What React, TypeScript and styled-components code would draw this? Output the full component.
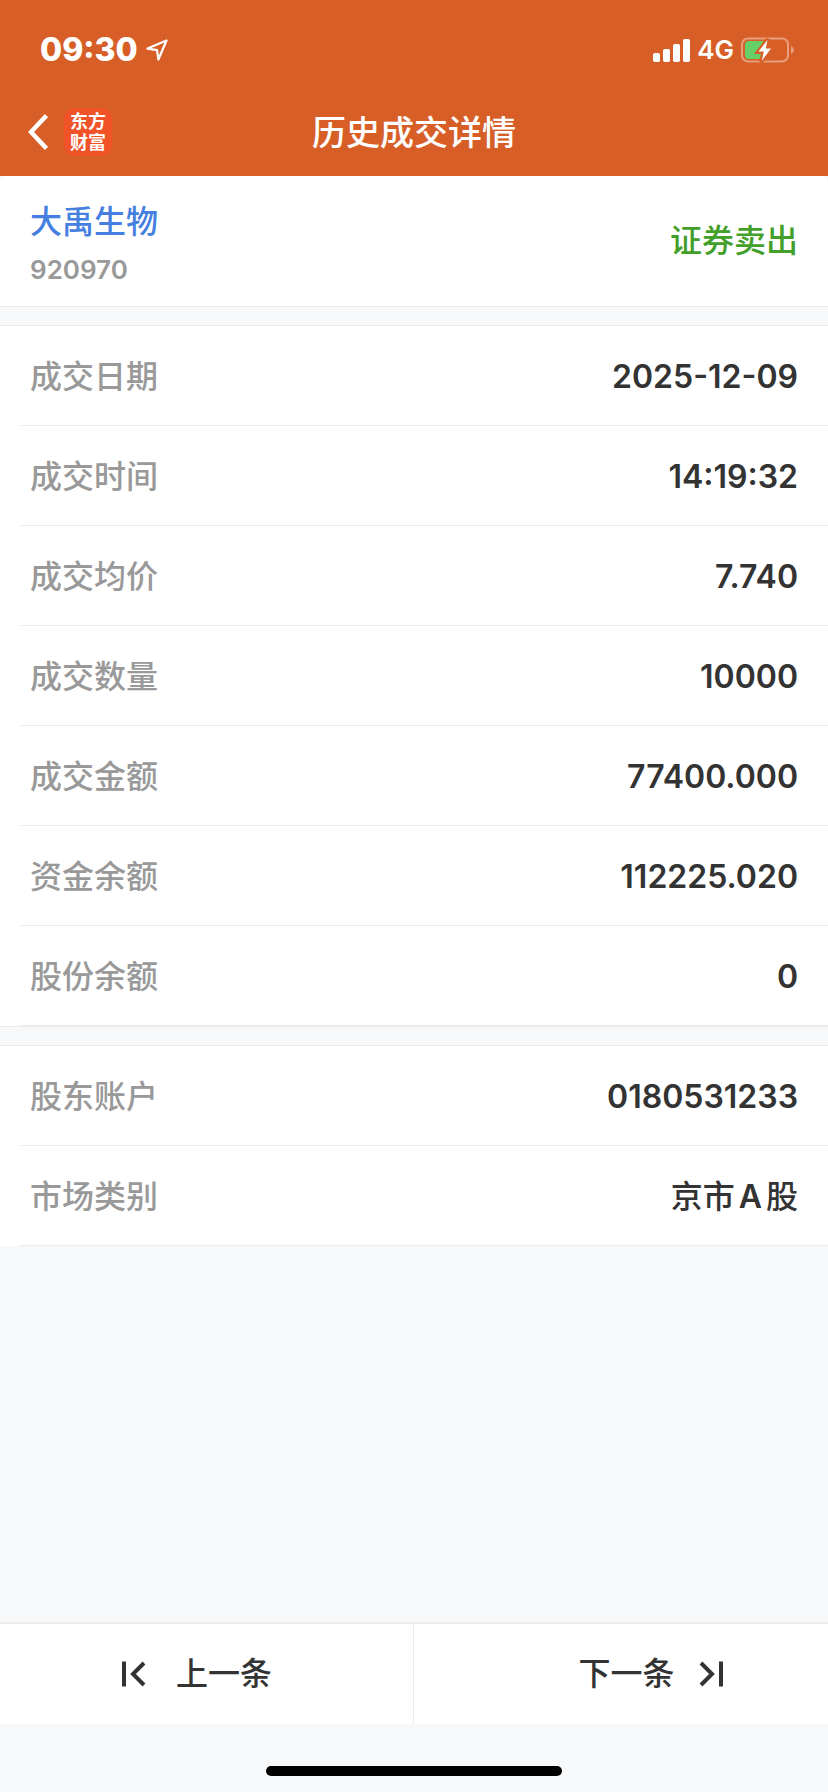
import React from "react";
import styled, { createGlobalStyle } from "styled-components";

const GlobalStyle = createGlobalStyle`
  * { box-sizing: border-box; }
  body {
    margin: 0;
    background: #f7f8fa;
    color: #333;
    font-family: Inter, "Noto Sans CJK SC", sans-serif;
    font-size: 32px;
    line-height: 48px;
    font-weight: 500;
  }
  button { font: inherit; color: inherit; background: none; border: 0; padding: 0; cursor: pointer; }
  svg { display: block; flex: none; }
`;

const Page = styled.div`
  min-height: 100vh;
  display: flex;
  flex-direction: column;
`;

const Header = styled.header`
  background: #d75f27;
  color: #fff;
`;

const StatusBar = styled.div`
  height: 88px;
  padding: 12px 34px 0 40px;
  display: flex;
  align-items: center;
  justify-content: space-between;
`;

const StatusGroup = styled.div<{ $gap: number }>`
  display: flex;
  align-items: center;
  gap: ${(p) => p.$gap}px;
`;

const Clock = styled.time`
  font-weight: 800;
`;

const Network = styled.span`
  font-size: 26px;
  font-weight: 600;
`;

const NavBar = styled.div`
  height: 88px;
  padding: 0 28px;
  display: grid;
  grid-template-columns: 1fr auto 1fr;
  align-items: center;
`;

const NavLeft = styled.div`
  display: flex;
  align-items: center;
  gap: 16px;
`;

const AppLogo = styled.span`
  width: 48px;
  height: 48px;
  padding: 3px 6px;
  border-radius: 10px;
  background: #ef5327;
  font-size: 18px;
  line-height: 21px;
  font-weight: 700;
`;

const Title = styled.h1`
  margin: 0;
  padding-top: 2px;
  font-size: 34px;
  font-weight: 500;
`;

const Summary = styled.section`
  height: 130px;
  padding: 0 30px;
  display: flex;
  align-items: center;
  justify-content: space-between;
  background: #fff;
  border-radius: 8px 8px 0 0;
`;

const Stock = styled.div`
  padding-top: 10px;
`;

const StockName = styled.a`
  display: block;
  color: #457fe0;
  text-decoration: none;
`;

const StockCode = styled.div`
  color: #999;
  font-size: 26px;
  font-weight: 600;
`;

const Side = styled.span`
  color: #429f2a;
`;

const Divider = styled.div`
  height: 20px;
  border: solid #ebebeb;
  border-width: 1px 0;
`;

const List = styled.dl`
  margin: 0;
  padding-left: 20px;
  background: #fff;
`;

const Row = styled.div`
  height: 100px;
  padding: 2px 30px 0 10px;
  display: flex;
  align-items: center;
  justify-content: space-between;
  border-bottom: 1px solid #ebebeb;
`;

const Label = styled.dt`
  color: #999;
`;

const Value = styled.dd`
  margin: 0;
  font-weight: 600;
`;

const MarketValue = styled(Value)`
  font-weight: 500;
`;

const Latin = styled.span`
  margin: 0 4px;
  font-weight: 600;
`;

const Footer = styled.footer`
  margin-top: auto;
`;

const Pager = styled.nav`
  display: grid;
  grid-template-columns: 1fr 1fr;
  border-top: 2px solid #ededed;
  background: #fff;
`;

const PagerButton = styled.button<{ $gap: number; $shift: number }>`
  height: 100px;
  display: flex;
  align-items: center;
  justify-content: center;
  gap: ${(p) => p.$gap}px;
  padding-right: ${(p) => (p.$shift < 0 ? -p.$shift : 0)}px;
  padding-left: ${(p) => (p.$shift > 0 ? p.$shift : 0)}px;

  &:first-child { border-right: 1px solid #ebebeb; }
`;

const HomeArea = styled.div`
  height: 68px;
  padding-bottom: 16px;
  display: flex;
  align-items: flex-end;
  justify-content: center;
`;

const HomeBar = styled.div`
  width: 296px;
  height: 10px;
  border-radius: 5px;
  background: #000;
`;

const LocationIcon = () => (
  <svg width="22" height="22" viewBox="0 0 22 22" fill="none" stroke="#fff" strokeWidth="2.2" strokeLinejoin="round">
    <path d="M20.500 1.500 L1.500 9.600 L11 11.200 L12.400 20.500 Z" />
  </svg>
);

const SignalIcon = () => (
  <svg width="37" height="23" viewBox="0 0 37 23" fill="#fff">
    <rect x="0" y="14" width="7" height="9" rx="1.8" />
    <rect x="10" y="10" width="7" height="13" rx="1.8" />
    <rect x="20" y="5" width="7" height="18" rx="1.8" />
    <rect x="30" y="0" width="7" height="23" rx="1.8" />
  </svg>
);

const BatteryIcon = () => (
  <svg width="53" height="26" viewBox="0 0 53 26">
    <rect x="1" y="1.5" width="46" height="23" rx="6" fill="none" stroke="#e79f7d" strokeWidth="2" />
    <path d="M50 9 Q53 10.5 53 13 Q53 15.500 50 17 Z" fill="#e79f7d" />
    <rect x="4" y="4" width="22" height="18" rx="3.500" fill="#66cf68" />
    <path d="M27 2 L17 15 L22.500 15 L20 25 L31 11.500 L25.500 11.500 Z" fill="#fff" stroke="#d75f27" strokeWidth="4" />
    <path d="M26.500 3 L17.500 14.500 L22.800 14.500 L20.700 24 L30 11.500 L24.800 11.500 Z" fill="#fff" />
  </svg>
);

const BackIcon = () => (
  <svg width="20" height="36" viewBox="0 0 20 36" fill="none" stroke="#fff" strokeWidth="4.5">
    <path d="M18.500 1.500 L3 18 L18.500 34.500" />
  </svg>
);

const FirstIcon = () => (
  <svg width="25" height="26" viewBox="0 0 25 26" fill="none" stroke="#333" strokeWidth="4">
    <path d="M3 0.500 V25.500 M23 2 L12 13 L23 24" />
  </svg>
);

const LastIcon = () => (
  <svg width="25" height="26" viewBox="0 0 25 26" fill="none" stroke="#333" strokeWidth="4">
    <path d="M22 0.500 V25.500 M2 2 L13 13 L2 24" />
  </svg>
);

const trade = [
  ["成交日期", "2025-12-09"],
  ["成交时间", "14:19:32"],
  ["成交均价", "7.740"],
  ["成交数量", "10000"],
  ["成交金额", "77400.000"],
  ["资金余额", "112225.020"],
  ["股份余额", "0"],
];

export default function App() {
  return (
    <Page>
      <GlobalStyle />
      <Header>
        <StatusBar>
          <StatusGroup $gap={8}>
            <Clock>09:30</Clock>
            <LocationIcon />
          </StatusGroup>
          <StatusGroup $gap={7}>
            <SignalIcon />
            <Network>4G</Network>
            <BatteryIcon />
          </StatusGroup>
        </StatusBar>
        <NavBar>
          <NavLeft>
            <button type="button" aria-label="返回"><BackIcon /></button>
            <AppLogo>东方财富</AppLogo>
          </NavLeft>
          <Title>历史成交详情</Title>
        </NavBar>
      </Header>

      <main>
        <Summary>
          <Stock>
            <StockName href="#stock">大禹生物</StockName>
            <StockCode>920970</StockCode>
          </Stock>
          <Side>证券卖出</Side>
        </Summary>
        <Divider />
        <List>
          {trade.map(([label, value]) => (
            <Row key={label}>
              <Label>{label}</Label>
              <Value>{value}</Value>
            </Row>
          ))}
        </List>
        <Divider />
        <List>
          <Row>
            <Label>股东账户</Label>
            <Value>0180531233</Value>
          </Row>
          <Row>
            <Label>市场类别</Label>
            <MarketValue>京市<Latin>A</Latin>股</MarketValue>
          </Row>
        </List>
      </main>

      <Footer>
        <Pager>
          <PagerButton type="button" $gap={30} $shift={-20}>
            <FirstIcon />
            上一条
          </PagerButton>
          <PagerButton type="button" $gap={24} $shift={60}>
            下一条
            <LastIcon />
          </PagerButton>
        </Pager>
        <HomeArea><HomeBar /></HomeArea>
      </Footer>
    </Page>
  );
}
